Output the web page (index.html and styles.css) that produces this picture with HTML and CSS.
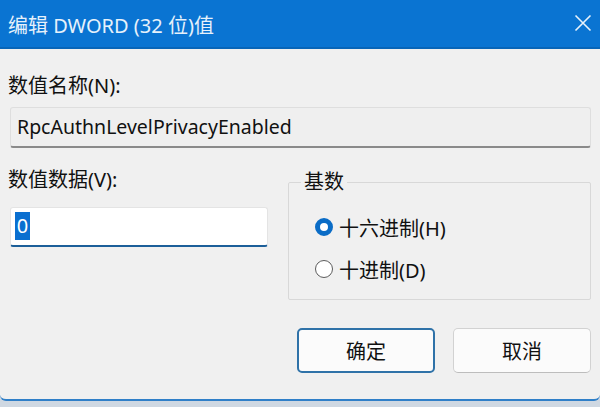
FILE: index.html
```html
<!DOCTYPE html>
<html lang="zh-CN">
<head>
<meta charset="utf-8">
<title>编辑 DWORD (32 位)值</title>
<link rel="stylesheet" href="styles.css">
</head>
<body>
<div class="dialog">
  <div class="titlebar">
    <span class="title">编辑 DWORD (32 位)值</span>
    <svg class="close" width="18" height="18" viewBox="0 0 18 18"><path d="M1.5 1.5L16.5 16.5M16.5 1.5L1.5 16.5" stroke="#e8f2fb" stroke-width="1.6" fill="none"/></svg>
  </div>
  <div class="content">
    <div class="label">数值名称(N):</div>
    <div class="namefield">RpcAuthnLevelPrivacyEnabled</div>
    <div class="row">
      <div class="datacol">
        <div class="label">数值数据(V):</div>
        <div class="datafield"><span class="sel">0</span></div>
      </div>
      <fieldset class="group">
        <legend>基数</legend>
        <div class="radio"><span class="dot on"></span><span>十六进制(H)</span></div>
        <div class="radio"><span class="dot"></span><span>十进制(D)</span></div>
      </fieldset>
    </div>
    <div class="buttons">
      <div class="btn primary">确定</div>
      <div class="btn">取消</div>
    </div>
  </div>
</div>
<div class="taskbar"></div>
</body>
</html>
```
FILE: styles.css
```css
html, body { margin: 0; padding: 0; }
body {
  width: 600px; height: 407px; overflow: hidden;
  background: #cfd8e2;
  font-family: "Noto Sans", "Noto Sans CJK SC", sans-serif;
  font-weight: 400;
  color: #111;
}
.dialog {
  height: 401px;
  box-sizing: border-box;
  background: #f0f0f0;
  border-bottom: 2px solid #2f7fc8;
  border-bottom-left-radius: 6px;
  border-bottom-right-radius: 6px;
  display: flex; flex-direction: column;
}
.titlebar {
  height: 47px;
  background: #0a74d2;
  border-bottom: 2px solid #0865b8;
  display: flex; align-items: center; justify-content: space-between;
  padding: 0 8px 0 8px;
}
.title { color: #e6f1fb; font-size: 20px; margin-top: 1px; }
.close { margin-top: -1px; }
.content { padding: 25px 9px 0 10px; display: flex; flex-direction: column; }
.label { font-size: 20px; line-height: 24px; margin-left: -2px; }
.namefield {
  margin-top: 9px;
  height: 41px; box-sizing: border-box;
  background: #efefef;
  border: 1px solid #dedede;
  border-bottom: 2px solid #8a8a8a;
  border-radius: 3px;
  padding-left: 6px;
  font-size: 19.5px; line-height: 37px;
}
.row { display: flex; margin-top: 20px; gap: 20px; }
.datacol { width: 258px; }
.datafield {
  margin-top: 15px;
  height: 40px; box-sizing: border-box;
  background: #fff;
  border: 1px solid #e4e4e4;
  border-bottom: 2px solid #1c5f99;
  border-radius: 3px;
  padding: 4px 0 0 4px;
}
.sel { display: inline-block; background: #0a6fd0; color: #fff; font-size: 20px; line-height: 28px; width: 15px; text-align: center; }
.group {
  flex: 1; margin: 2px 0 0 0;
  border: 1px solid #d8d8d8; border-radius: 2px;
  padding: 12px 0 0 25px;
  height: 130px; box-sizing: border-box;
  min-width: 0;
}
.group legend { font-size: 20px; padding: 0 3px; margin-left: -13px; line-height: 24px; }
.radio { display: flex; align-items: center; font-size: 20px; height: 42px; gap: 6px; margin-left: 1px; }
.dot {
  width: 18px; height: 18px; box-sizing: border-box;
  border-radius: 50%; border: 1.6px solid #5c5c5c; background: #fff;
}
.dot.on { border: 5px solid #0a6cc6; }
.buttons { display: flex; justify-content: flex-end; gap: 18px; margin-top: 28px; }
.btn {
  width: 138px; height: 45px; box-sizing: border-box;
  border: 1px solid #d2d2d2; border-bottom-color: #bdbdbd;
  border-radius: 5px; background: #fbfbfb;
  display: flex; align-items: center; justify-content: center;
  font-size: 20px;
}
.btn.primary { border: 2px solid #2f72a8; }
.taskbar { height: 6px; }
```
